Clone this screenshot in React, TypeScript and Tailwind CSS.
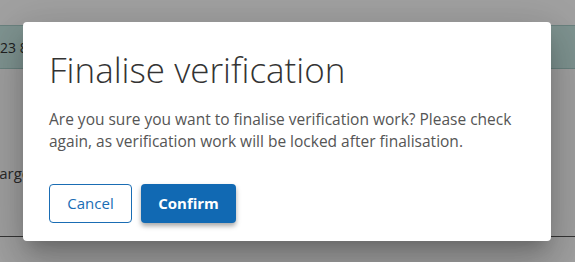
export default function App() {
  return (
    <div className="relative h-[262px] w-[575px] overflow-hidden bg-white font-['Open_Sans',sans-serif]">
      {/* page behind the modal */}
      <div className="pt-[25px]">
        <div className="-ml-[8px] flex h-[44px] items-center border-y border-[#a9cfca] bg-[#c9ebe6] text-[14px] text-[#333]">
          123 8
        </div>
        <div className="-ml-[9px] mt-[93px] text-[15px] text-[#444]">Target</div>
        <div className="mt-[51px] border-b border-[#555]"></div>
      </div>

      {/* overlay */}
      <div className="absolute inset-0 bg-black/[0.37]"></div>

      {/* dialog */}
      <div className="absolute left-[23px] top-[22px] h-[219px] w-[528px] rounded-[4px] bg-white pl-[26px] pt-[23px] shadow-[0_11px_15px_-7px_rgba(0,0,0,0.2),0_24px_38px_3px_rgba(0,0,0,0.14),0_9px_46px_8px_rgba(0,0,0,0.12)]">
        <h2 className="text-[35px] font-light leading-[49px] text-[#333]">Finalise verification</h2>
        <p className="mt-[14px] text-[15.5px] leading-[22px] text-[#555]">
          Are you sure you want to finalise verification work? Please check
          <br />
          again, as verification work will be locked after finalisation.
        </p>
        <div className="mt-[32px] flex gap-[9px]">
          <button className="h-[39px] w-[83px] rounded-[4px] border border-[#1a6db4] text-[15px] text-[#1a6db4]">
            Cancel
          </button>
          <button className="h-[39px] w-[95px] rounded-[4px] bg-[#1169b3] text-[15px] font-bold text-white shadow-[0_3px_5px_rgba(0,0,0,0.35)]">
            Confirm
          </button>
        </div>
      </div>
    </div>
  );
}
